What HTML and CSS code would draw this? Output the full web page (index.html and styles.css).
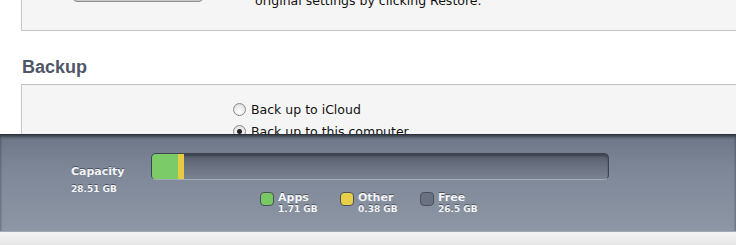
FILE: index.html
```html
<!DOCTYPE html>
<html lang="en">
<head>
    <meta charset="UTF-8">
    <title>Summary</title>
    <link rel="stylesheet" href="styles.css">
</head>
<body>
    <div class="page">
        <div class="content">
            <div class="restore-panel">
                <div class="restore-button"></div>
                <p class="restore-text">original settings by clicking Restore.</p>
            </div>

            <h2 class="section-title">Backup</h2>

            <div class="backup-panel">
                <label class="radio-row">
                    <span class="radio"></span>
                    <span>Back up to iCloud</span>
                </label>
                <label class="radio-row">
                    <span class="radio checked"></span>
                    <span>Back up to this computer</span>
                </label>
            </div>
        </div>

        <!-- capacity strip pinned to the bottom of the window -->
        <div class="capacity">
            <div class="capacity-label">
                <div class="cap-title">Capacity</div>
                <div class="cap-size">28.51 GB</div>
            </div>
            <div class="capacity-main">
                <div class="meter">
                    <div class="seg seg-apps" style="width: 26px"></div>
                    <div class="seg seg-other" style="width: 6px"></div>
                </div>
                <ul class="legend">
                    <li>
                        <span class="swatch swatch-apps"></span>
                        <div><div class="legend-name">Apps</div><div class="legend-size">1.71 GB</div></div>
                    </li>
                    <li>
                        <span class="swatch swatch-other"></span>
                        <div><div class="legend-name">Other</div><div class="legend-size">0.38 GB</div></div>
                    </li>
                    <li>
                        <span class="swatch swatch-free"></span>
                        <div><div class="legend-name">Free</div><div class="legend-size">26.5 GB</div></div>
                    </li>
                </ul>
            </div>
        </div>
        <div class="footer"></div>
    </div>
</body>
</html>
```

FILE: styles.css
```css
body {
    margin: 0;
    font-family: "DejaVu Sans", Arial, sans-serif;
    background-color: #fff;
}

.page {
    width: 736px;
    height: 245px;
    overflow: hidden;
    display: flex;
    flex-direction: column;
}

.content {
    height: 134px;
    overflow: hidden;
    background-color: #fff;
    flex-shrink: 0;
}

.restore-panel {
    margin-left: 21px;
    height: 30px;
    background-color: #f5f5f5;
    border-left: 1px solid #c8c8c8;
    border-bottom: 1px solid #c4c4c4;
    display: flex;
    align-items: flex-start;
}

.restore-button {
    margin-left: 51px;
    margin-top: -20px;
    width: 130px;
    height: 22px;
    border-radius: 4px;
    background: linear-gradient(#e4e4e4, #c9c9c9);
    border: 1px solid #8f8f8f;
    box-sizing: border-box;
}

.restore-text {
    margin: -7px 0 0 52px;
    font-size: 12.5px;
    line-height: 15px;
    color: #111;
}

.section-title {
    margin: 25px 0 0 22px;
    font-family: "Liberation Sans", Arial, sans-serif;
    font-size: 18px;
    line-height: 22px;
    font-weight: bold;
    color: #4e5767;
}

.backup-panel {
    margin: 6px 0 0 21px;
    height: 60px;
    background-color: #f5f5f5;
    border-left: 1px solid #c8c8c8;
    border-top: 1px solid #c4c4c4;
    padding: 17px 0 0 211px;
    display: flex;
    flex-direction: column;
    gap: 7px;
}

.radio-row {
    display: flex;
    align-items: center;
    gap: 5px;
    font-size: 12.5px;
    line-height: 15px;
    color: #111;
}

.radio {
    width: 13px;
    height: 13px;
    border-radius: 50%;
    box-sizing: border-box;
    border: 1px solid #8a8a8a;
    background: radial-gradient(circle at 50% 70%, #ffffff, #d8d8d8);
    position: relative;
}

.radio.checked::after {
    content: "";
    position: absolute;
    left: 3px;
    top: 3px;
    width: 5px;
    height: 5px;
    border-radius: 50%;
    background-color: #222;
}

.capacity {
    height: 97px;
    flex-shrink: 0;
    background: linear-gradient(#6c7686, #7e8898 40%, #8d96a4);
    box-shadow: inset 0 1px 0 #2b3039, inset 0 3px 3px rgba(20, 24, 30, 0.6);
    border-bottom: 1px solid #a3a9b2;
    display: flex;
    font-family: "DejaVu Sans", Arial, sans-serif;
    font-weight: bold;
    color: #f4f5f7;
    text-shadow: 0 -1px 0 rgba(40, 45, 55, 0.6);
}

.capacity-label {
    width: 80px;
    padding: 31px 0 0 71px;
}

.cap-title {
    font-size: 11px;
    line-height: 14px;
}

.cap-size {
    margin-top: 5px;
    font-size: 9px;
    line-height: 11px;
}

.capacity-main {
    padding-top: 19px;
}

.meter {
    width: 458px;
    height: 27px;
    box-sizing: border-box;
    border-radius: 5px;
    border: 1px solid #3e4450;
    border-bottom-color: #a6acb6;
    background: linear-gradient(#535a68, #646c7b 35%, #7a8392);
    box-shadow: inset 0 2px 2px rgba(20, 24, 30, 0.35);
    display: flex;
    overflow: hidden;
}

.seg {
    height: 100%;
}

.seg-apps {
    background-color: #7bcb68;
}

.seg-other {
    background-color: #e7cc43;
}

.legend {
    list-style: none;
    margin: 11px 0 0 109px;
    padding: 0;
    display: flex;
}

.legend li {
    width: 80px;
    display: flex;
    gap: 4px;
}

.swatch {
    margin-top: 1px;
    width: 14px;
    height: 14px;
    box-sizing: border-box;
    border-radius: 4px;
    border: 1px solid #4a505c;
}

.swatch-apps {
    background-color: #78c864;
}

.swatch-other {
    background-color: #e8cf48;
}

.swatch-free {
    background-color: #6a7282;
}

.legend-name {
    font-size: 11px;
    line-height: 13px;
}

.legend-size {
    font-size: 9px;
    line-height: 11px;
}

.footer {
    flex: 1;
    background: linear-gradient(#f4f4f4, #e6e6e6);
}
```
